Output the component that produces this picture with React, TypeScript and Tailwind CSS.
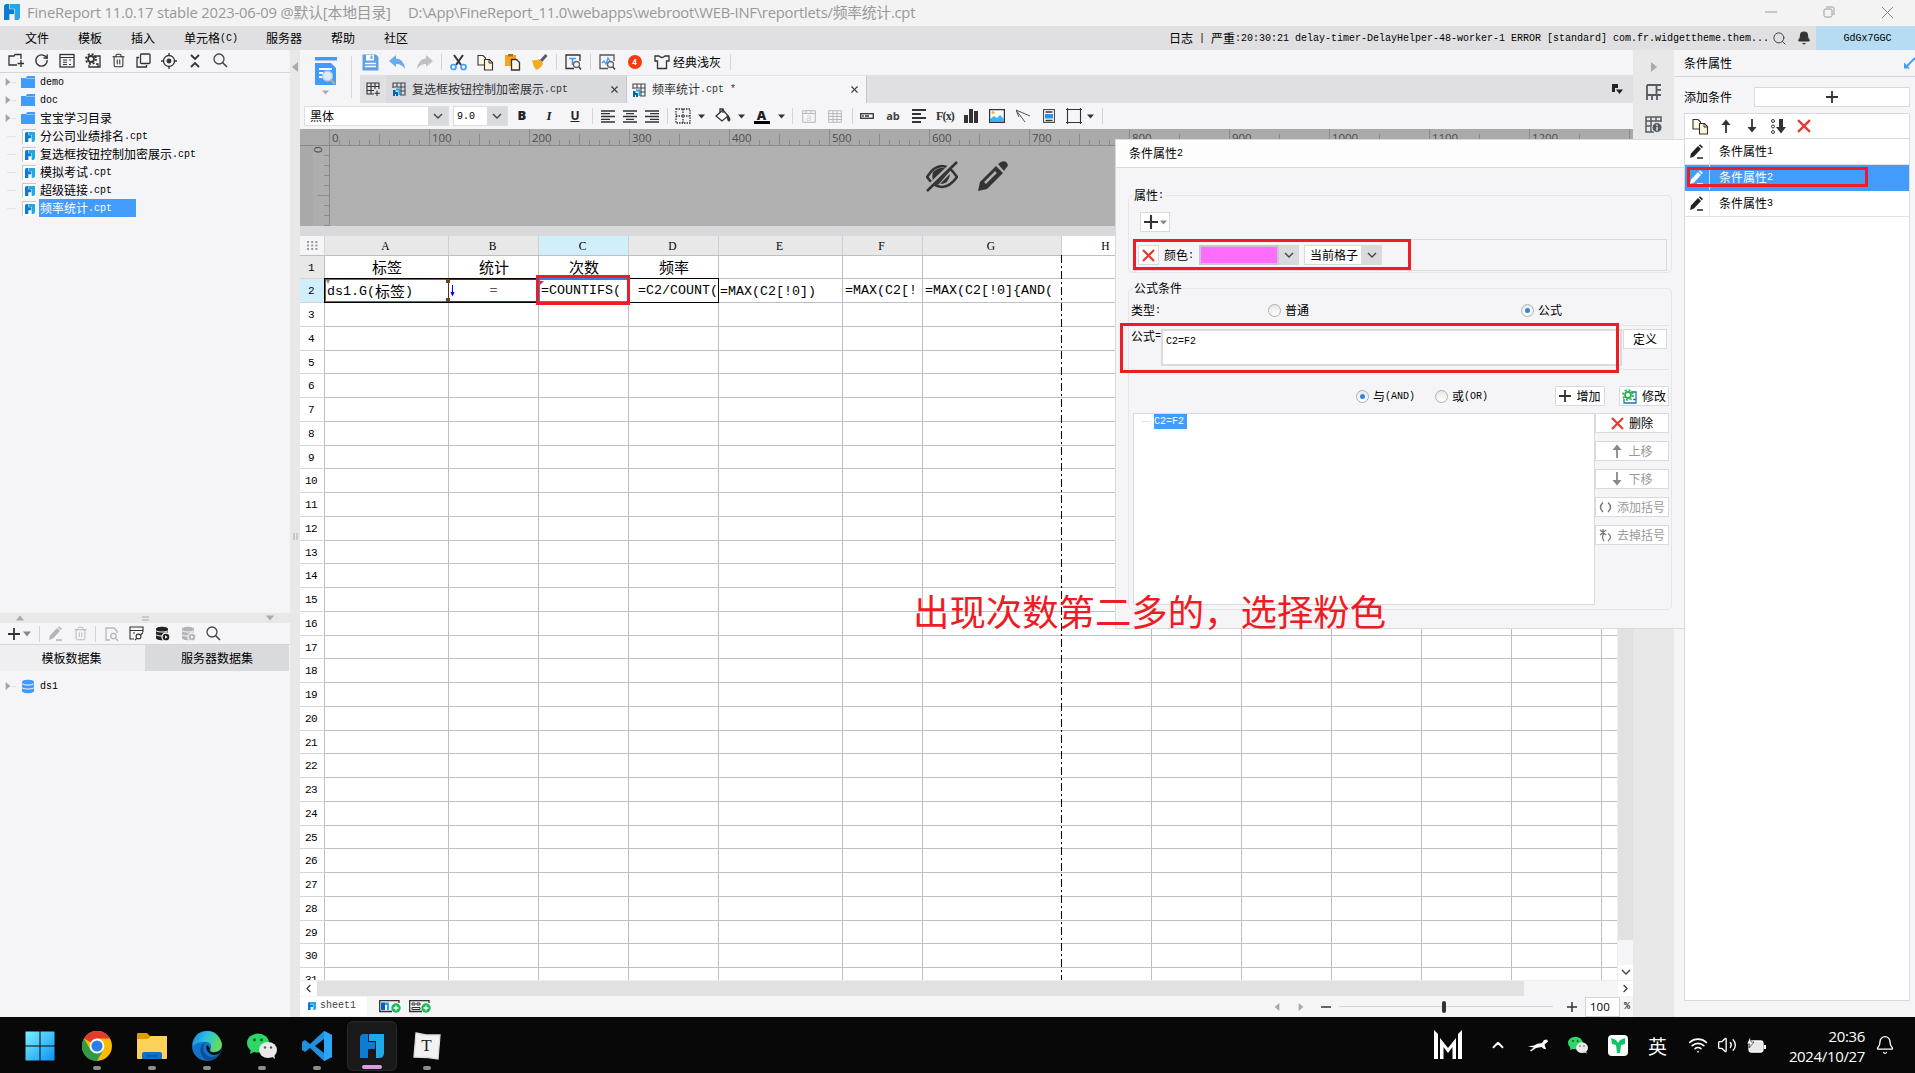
import React from "react";
import {
  Search, RotateCw, Trash2, Bell, Wifi, Volume2, X, ChevronLeft, ChevronRight, ChevronUp,
} from "lucide-react";

type Kids = { children?: React.ReactNode };

/* Mixed-script text: ideographs at full size, Latin runs in a narrower monospace. */
function T({ s, big = false }: { s: string; big?: boolean }) {
  const parts = s.match(/[\u2e80-\uffee]+|[^\u2e80-\uffee]+/g) || [];
  const latin = big ? "text-[13.33px]" : "text-[10px]";
  const cjk = big ? "text-[15px]" : "text-[12px]";
  return (
    <span className="flex items-center whitespace-pre leading-none">
      {parts.map((p, i) =>
        /[\u2e80-\uffee]/.test(p) ? (
          <span key={i} className={`${cjk} -translate-y-px font-['Noto_Sans_CJK_SC',sans-serif] leading-[15px]`}>{p}</span>
        ) : (
          <span key={i} className={`${latin} font-['Liberation_Mono',monospace] leading-[15px]`}>{p}</span>
        )
      )}
    </span>
  );
}

function Ic({ w = 16, h, vb, c = "#333", children }: Kids & { w?: number; h?: number; vb?: string; c?: string }) {
  return (
    <svg width={w} height={h ?? w} viewBox={vb ?? `0 0 ${w} ${h ?? w}`} fill="none" stroke={c} strokeWidth={1.3} className="shrink-0">
      {children}
    </svg>
  );
}

function FrLogo({ size }: { size: number }) {
  return (
    <svg width={size} height={size} viewBox="0 0 24 24" className="shrink-0">
      <path d="M0 4Q0 0 4 0H8V8H15V15H8V24H0Z" fill="#0a7cd4" />
      <path d="M9 0H24V19Q24 24 19 24H16V7H9Z" fill="#20a9e6" />
    </svg>
  );
}

function Tri({ dir = "down", c = "#aaa", w = 8 }: { dir?: "down" | "up" | "left" | "right"; c?: string; w?: number }) {
  const d = { down: "M0 2H10L5 8Z", up: "M0 8H10L5 2Z", left: "M8 0V10L2 5Z", right: "M2 0V10L8 5Z" }[dir];
  return (
    <svg width={w} height={w} viewBox="0 0 10 10" className="shrink-0"><path d={d} fill={c} /></svg>
  );
}

const Plus = ({ w = 12, c = "#333" }: { w?: number; c?: string }) => (
  <Ic w={w} vb="0 0 12 12" c={c}><path d="M6 0V12M0 6H12" strokeWidth={1.8} /></Ic>
);
const RedX = ({ w = 13 }: { w?: number }) => (
  <Ic w={w} vb="0 0 13 13" c="#e8392f"><path d="M1 1L12 12M12 1L1 12" strokeWidth={2.2} /></Ic>
);
const ArrowUp = ({ c = "#333" }: { c?: string }) => (
  <Ic w={12} h={14} c={c}><path d="M6 14V3" strokeWidth={1.8} /><path d="M1.5 6L6 .5L10.5 6Z" fill={c} stroke="none" /></Ic>
);
const ArrowDown = ({ c = "#333" }: { c?: string }) => (
  <Ic w={12} h={14} c={c}><path d="M6 0V11" strokeWidth={1.8} /><path d="M1.5 8L6 13.5L10.5 8Z" fill={c} stroke="none" /></Ic>
);
const CopyPages = () => (
  <Ic w={17} c="#333"><path d="M1 1.5H6L8.5 4V11H1Z" fill="#fff8e6" strokeWidth={1.1} /><path d="M7.5 5.5H12.5L15.5 8.5V16H7.5Z" fill="#fff5da" strokeWidth={1.1} /><path d="M12 5.5V9H15.5" strokeWidth={1} /></Ic>
);
const Pen = ({ c = "#222" }: { c?: string }) => (
  <Ic w={15} c={c}><path d="M1 14L2 9.5L9 2L12 5L5 12.5Z" fill={c} stroke="none" /><path d="M9.800 1.300L11 0.200L14 3L12.800 4.300Z" fill={c} stroke="none" /><path d="M8 14H14" strokeWidth={1.5} /></Ic>
);
const GridFile = () => (
  <Ic w={14} c="#444"><path d="M1 6V1H13V13H8M1 5H13M5 1V5M9 1V13M8 9H13" strokeWidth={1.1} /><path d="M1 8H3.5V10H6V14H4V12H3V14H1Z" fill="#0b5fb3" stroke="none" /><path d="M4 7.500H7.500V13" stroke="#20a9e6" strokeWidth={1.8} /></Ic>
);
const Db = ({ c = "#3f9bfc", badge }: { c?: string; badge?: boolean }) => (
  <Ic w={15}>
    <path d="M1 3C1 0 13 0 13 3V12C13 15 1 15 1 12Z" fill={c} stroke="none" />
    <path d="M1 4.5C2 6.5 12 6.5 13 4.5M1 8.5C2 10.5 12 10.5 13 8.5" stroke="#f5f5f7" strokeWidth={1} />
    {badge && <><circle cx="11" cy="11" r="4" fill={c} stroke="#f5f5f7" /><path d="M10 9.3L12.6 11L10 12.7Z" fill="#fff" stroke="none" /></>}
  </Ic>
);
const Lens = ({ s = 15 }: { s?: number }) => (
  <Ic w={s} vb="0 0 15 15" c="#444"><circle cx="6" cy="6" r="5" /><path d="M9.5 9.5L14 14" strokeWidth={1.6} /></Ic>
);
const Gear = ({ c }: { c: string }) => (
  <g><circle cx="6" cy="6" r="3" stroke={c} strokeWidth={1.8} /><circle cx="6" cy="6" r="5" stroke={c} strokeWidth={1.8} strokeDasharray="2 1.93" /></g>
);

const Slot = ({ children, w = "w-[27px]" }: Kids & { w?: string }) => (
  <div className={`flex h-full shrink-0 items-center justify-center ${w}`}>{children}</div>
);
const Sep = ({ w = "w-[7px]" }: { w?: string }) => (
  <div className={`flex shrink-0 items-center justify-center ${w}`}><div className="h-4 w-px bg-[#d3d4d8]" /></div>
);
const Caret = () => (
  <Ic w={10} h={7} c="#444"><path d="M1 1L5 5L9 1" strokeWidth={1.4} /></Ic>
);

function TitleBar() {
  return (
    <div className="flex h-[26px] shrink-0 items-center bg-[#f3f3f3] pb-[2px] pl-1 text-[14.8px] text-[#999]">
      <FrLogo size={16} />
      <div className="ml-[7px] w-[381px] whitespace-pre font-['Open_Sans','Noto_Sans_CJK_SC',sans-serif] tracking-[-0.17px]">FineReport 11.0.17 stable 2023-06-09 @默认[本地目录]</div>
      <div className="whitespace-pre font-['Open_Sans','Noto_Sans_CJK_SC',sans-serif] tracking-[-0.24px]">D:\App\FineReport_11.0\webapps\webroot\WEB-INF\reportlets/频率统计.cpt</div>
      <div className="ml-auto flex items-center pr-[21px]">
        <Ic w={12} c="#999"><path d="M0 6H12" strokeWidth={1} /></Ic>
        <span className="ml-[46px] flex"><Ic w={12} c="#999"><rect x="1" y="3" width="8" height="8" rx="1.5" strokeWidth={1} /><path d="M3 1H9.5Q11 1 11 2.5V9" strokeWidth={1} /></Ic></span>
        <span className="ml-[46px] flex"><Ic w={13} c="#888"><path d="M1 1L12 12M12 1L1 12" strokeWidth={1} /></Ic></span>
      </div>
    </div>
  );
}

function MenuBar() {
  return (
    <div className="flex h-6 shrink-0 items-center bg-[#e0e0e2] pl-[25px] text-black">
      <div className="w-[53px]"><T s="文件" /></div>
      <div className="w-[53px]"><T s="模板" /></div>
      <div className="w-[53px]"><T s="插入" /></div>
      <div className="w-[82px]"><T s="单元格(C)" /></div>
      <div className="w-[65px]"><T s="服务器" /></div>
      <div className="w-[53px]"><T s="帮助" /></div>
      <div><T s="社区" /></div>
      <div className="ml-auto flex h-full items-center">
        <div className="w-[42px]"><T s="日志 |" /></div>
        <div className="w-[561px]"><T s="严重:20:30:21 delay-timer-DelayHelper-48-worker-1 ERROR [standard] com.fr.widgettheme.them..." /></div>
        <Search size={15} strokeWidth={1.6} color="#444" />
        <span className="ml-[10px] mr-[5px] flex"><Bell size={14} fill="#333" color="#333" /></span>
        <div className="flex h-full w-[99px] items-center justify-center bg-[#b5dcf2] pl-1"><T s="GdGx7GGC" /></div>
      </div>
    </div>
  );
}

function TreeRow({ label, kind, selected }: { label: string; kind: "dir" | "file" | "db"; selected?: boolean }) {
  return (
    <div className="flex h-[18px] items-center pl-1">
      <div className="flex w-[17px] items-center">
        {kind !== "file" ? <><Tri dir="right" c="#a5a5a8" /><div className="h-px w-1 bg-[#dcdcdf]" /></> : <div className="ml-[3px] h-px w-[9px] bg-[#e2e2e5]" />}
      </div>
      <div className="flex w-[18px] items-center">
        {kind === "dir" && <Ic w={14} h={12}><path d="M0 2H5L6 0H14V12H0Z" fill="#3f9bfc" stroke="none" /><path d="M5 2.5H14" stroke="#8cc2fd" strokeWidth={1} /></Ic>}
        {kind === "file" && <div className="ml-px flex h-[15px] w-[14px] items-center justify-center border-l border-t border-[#c9c9cc] bg-white"><FrLogo size={10} /></div>}
        {kind === "db" && <Db />}
      </div>
      <div className={selected ? "flex h-[18px] w-[97px] items-center bg-[#429cfb] pl-px text-white" : "pl-px text-black"}><T s={label} /></div>
    </div>
  );
}

function LeftPanel() {
  return (
    <div className="flex w-[290px] shrink-0 flex-col bg-[#f5f5f7]">
      <div className="flex h-[23px] shrink-0 items-center border-b border-[#d5d5d8] pb-px pl-[3px]">
        <Slot w="w-[25.6px]"><Ic w={16}><path d="M9 12H1V3H6L7 1.5H13V6M13 7V14M9.5 10.5H16" /></Ic></Slot>
        <Slot w="w-[25.6px]"><RotateCw size={15} strokeWidth={2.3} color="#333" /></Slot>
        <Slot w="w-[25.6px]"><Ic w={16}><rect x="1" y="1.5" width="14" height="12.5" /><path d="M1 4.5H15M4 7H8M4 9.2H8M4 11.5H8M10 7H12M10 11.5H12" strokeWidth={1.1} /></Ic></Slot>
        <Slot w="w-[25.6px]"><Ic w={16}><Gear c="#333" /><path d="M9 3H15V14H4V12M11 11H13V14" /></Ic></Slot>
        <Slot w="w-[25.6px]"><Trash2 size={15} strokeWidth={1.7} color="#333" /></Slot>
        <Slot w="w-[25.6px]"><Ic w={15}><rect x="4.5" y="1" width="9.5" height="9.5" rx="1" /><path d="M3 4.5H1V14H10.5V12" /></Ic></Slot>
        <Slot w="w-[25.6px]"><Ic w={16}><circle cx="8" cy="8" r="5.5" /><circle cx="8" cy="8" r="1.8" fill="#333" /><path d="M8 0V3M8 13V16M0 8H3M13 8H16" /></Ic></Slot>
        <Slot w="w-[25.6px]"><Ic w={10} h={14}><path d="M1 1L5 5L9 1M1 13L5 9L9 13" strokeWidth={1.8} /></Ic></Slot>
        <Slot w="w-[25.6px]"><Lens /></Slot>
      </div>
      <div className="h-[540px] shrink-0">
        <TreeRow kind="dir" label="demo" />
        <TreeRow kind="dir" label="doc" />
        <TreeRow kind="dir" label="宝宝学习目录" />
        <TreeRow kind="file" label="分公司业绩排名.cpt" />
        <TreeRow kind="file" label="复选框按钮控制加密展示.cpt" />
        <TreeRow kind="file" label="模拟考试.cpt" />
        <TreeRow kind="file" label="超级链接.cpt" />
        <TreeRow kind="file" label="频率统计.cpt" selected />
      </div>
      <div className="flex h-[10px] shrink-0 items-center justify-between bg-[#e8e8e8] px-4">
        <Tri dir="up" /><Ic w={7} h={5} c="#aaa"><path d="M0 1H7M0 4H7" strokeWidth={1} /></Ic><Tri />
      </div>
      <div className="flex h-[22px] shrink-0 items-center border-b border-[#d5d5d8] pl-[8px]">
        <Plus /><span className="ml-[3px] flex w-[14px]"><Tri c="#888" /></span>
        <Sep w="w-[5px]" />
        <Slot w="w-[26px]"><Pen c="#b5b5b8" /></Slot>
        <Slot w="w-[24px]"><Trash2 size={15} strokeWidth={1.5} color="#b5b5b8" /></Slot>
        <Sep w="w-[7px]" />
        <Slot w="w-[25px]"><Ic w={14} c="#b5b5b8"><path d="M5 13H1V1H9L12 4V6" /><circle cx="8.5" cy="9" r="2.7" /><path d="M10.5 11L13 14" /></Ic></Slot>
        <Slot w="w-[25px]"><Ic w={15}><path d="M5 13H1V1H14V6M1 4.5H14M4 7H6" strokeWidth={1.1} /><circle cx="9.500" cy="10.500" r="2.400" strokeWidth={1.1} /><path d="M11.5 9L14 6.5M7.500 12.500L6 14" strokeWidth={1.1} /></Ic></Slot>
        <Slot w="w-[26px]"><Db c="#222" badge /></Slot>
        <Slot w="w-[26px]"><Db c="#b5b5b8" badge /></Slot>
        <Slot w="w-[25px]"><Lens /></Slot>
      </div>
      <div className="flex h-[26px] shrink-0 pr-px">
        <div className="flex w-[145px] items-center justify-center bg-[#efeff1] pr-[2px]"><T s="模板数据集" /></div>
        <div className="flex flex-1 items-center justify-center bg-[#d9dade]"><T s="服务器数据集" /></div>
      </div>
      <div className="pt-[6px]"><TreeRow kind="db" label="ds1" /></div>
    </div>
  );
}

function Toolbar() {
  return (
    <div className="-ml-[3px] flex h-[25px] items-center pb-px">
      <Slot><Ic w={17}><path d="M.5 .5H14L16.500 3V16.500H.5Z" fill="#5f9fe3" stroke="none" /><rect x="4" y="1" width="8" height="5.500" fill="#fff" stroke="none" /><path d="M9.500 1.500V5" stroke="#5f9fe3" strokeWidth={1.8} /><path d="M3 9.500H14M3 12.500H14" stroke="#fff" /></Ic></Slot>
      <Slot><Ic w={17} h={15}><path d="M0 6L7 0V3.500Q15 4 16 14Q12 8.500 7 9V12Z" fill="#6aaaf0" stroke="none" /></Ic></Slot>
      <Slot><Ic w={17} h={15}><path d="M17 6L10 0V3.500Q2 4 1 14Q5 8.500 10 9V12Z" fill="#c0c0c3" stroke="none" /></Ic></Slot>
      <Sep />
      <Slot><Ic w={17}><path d="M4 1L11 11M13 1L6 11" stroke="#333" strokeWidth={2} /><circle cx="3.500" cy="13" r="2.500" stroke="#3f9bfc" strokeWidth={1.700} /><circle cx="13.500" cy="13" r="2.500" stroke="#3f9bfc" strokeWidth={1.700} /></Ic></Slot>
      <Slot><CopyPages /></Slot>
      <Slot><Ic w={17}><path d="M1 1H12V12H1Z" fill="#f2a71b" stroke="none" /><path d="M4 2.500H9V0H4Z" fill="#b5651d" stroke="none" /><path d="M7.500 5.500H12.500L15.500 8.500V16H7.500Z" fill="#fff8e6" /></Ic></Slot>
      <Slot><Ic w={17}><path d="M15.500 1L10 7" stroke="#555a66" strokeWidth={3} /><path d="M1 6Q6 7 8 5L12 9Q11 14 5 16Q2 12 1 6Z" fill="#f2ac1d" stroke="none" /></Ic></Slot>
      <Sep />
      <Slot><Ic w={17}><path d="M9 14.500H1V1H15V7" /><path d="M4 4.500H11M7.500 4.500V11" stroke="#3f9bfc" strokeWidth={1.700} /><circle cx="11.500" cy="10.500" r="3" stroke="#666" /><path d="M14 13L16 15.500" /></Ic></Slot>
      <Sep />
      <Slot><Ic w={17}><path d="M9 14.500H1V1H15V7" stroke="#555" /><path d="M3 9L5 7L7 10L9 4L11 7" stroke="#3f9bfc" /><circle cx="11.500" cy="10.500" r="3" stroke="#666" /><path d="M14 13L16 15.500" /></Ic></Slot>
      <Slot><div className="flex size-[14px] items-center justify-center rounded-full bg-[#f63a10] font-['Open_Sans',sans-serif] text-[8px] font-bold text-white">4</div></Slot>
      <Slot><Ic w={16}><path d="M1 2H5Q8 5 11 2H15V7H12.500V14.500H3.500V7H1Z" /></Ic></Slot>
      <span className="mr-[6px] -ml-[2px]"><T s="经典浅灰" /></span>
      <Sep />
    </div>
  );
}

function TabStrip() {
  return (
    <div className="flex h-7 bg-[#e0e0e2]">
      <Slot w="w-[26px]"><Ic w={14}><path d="M8 12H1V1H13V7M1 4.500H13M1 8.500H8M5 1V12M9 1V7M11 8.500V14M8.500 11.200H14" strokeWidth={1.1} /></Ic></Slot>
      <div className="flex w-[240px] items-center bg-[#d9dadd] pl-[6px] text-[#333]">
        <GridFile /><span className="ml-[6px]"><T s="复选框按钮控制加密展示.cpt" /></span>
        <span className="ml-auto mr-[6px]"><X size={11} strokeWidth={2.500} color="#444" /></span>
      </div>
      <div className="flex w-[241px] items-center border-x border-t border-t-[#e4e4e6] border-x-[#c6c7ca] bg-[#f5f5f7] pl-[5px] text-[#333]">
        <GridFile /><span className="ml-[6px]"><T s="频率统计.cpt *" /></span>
        <span className="ml-auto mr-[6px]"><X size={11} strokeWidth={2.500} color="#444" /></span>
      </div>
      <span className="ml-auto mr-[9px] flex items-center"><Ic w={13} h={11}><path d="M1 0H7V4H4V8H1Z" fill="#222" stroke="none" /><path d="M5 5.500H12L8.500 10Z" fill="#222" stroke="none" /></Ic></span>
    </div>
  );
}

const Align = ({ d }: { d: string }) => <Ic w={14} h={13}><path d={d} strokeWidth={1.300} /></Ic>;

function FontBar() {
  return (
    <div className="flex h-[26px] items-center bg-[#f5f5f7] pl-1">
      <div className="flex h-5 w-[145px] border border-[#dcdde0] bg-white">
        <div className="flex flex-1 items-center pl-[5px]"><T s="黑体" /></div>
        <div className="flex w-5 items-center justify-center bg-[#d9dadd]"><Caret /></div>
      </div>
      <div className="ml-1 flex h-5 w-[55px] border border-[#dcdde0] bg-white">
        <div className="flex flex-1 items-center pl-[3px]"><T s="9.0" /></div>
        <div className="flex w-5 items-center justify-center bg-[#d9dadd]"><Caret /></div>
      </div>
      <Slot w="w-[28px]"><span className="font-['Open_Sans',sans-serif] text-[13px] font-extrabold text-[#222]">B</span></Slot>
      <Slot w="w-[26px]"><span className="font-['Liberation_Serif',serif] text-[13px] font-bold italic text-[#222]">I</span></Slot>
      <Slot w="w-[26px]"><span className="font-['Open_Sans',sans-serif] text-[12px] font-bold text-[#222] underline">U</span></Slot>
      <Sep w="w-[9px]" />
      <Slot w="w-[22px]"><Align d="M0 1H14M0 3.700H9M0 6.500H14M0 9.300H9M0 12H14" /></Slot>
      <Slot w="w-[22px]"><Align d="M0 1H14M3 3.700H11M0 6.500H14M3 9.300H11M0 12H14" /></Slot>
      <Slot w="w-[22px]"><Align d="M0 1H14M5 3.700H14M0 6.500H14M5 9.300H14M0 12H14" /></Slot>
      <Sep w="w-[9px]" />
      <Slot w="w-[22px]"><Ic w={16}><path d="M1 1H15V15H1ZM8 1V15M1 8H15" strokeDasharray="1.500 1" /></Ic></Slot>
      <Slot w="w-[14px]"><Tri c="#333" w={7} /></Slot>
      <Slot w="w-[30px]"><Ic w={16}><path d="M1 8L8 2L13 8L7 13Z" fill="#fff" /><path d="M5 5V1H8V5" /><path d="M13 8Q16 12 14 13Q12 12 13 8Z" fill="#333" /></Ic></Slot>
      <Slot w="w-[7px]"><Tri c="#333" w={7} /></Slot>
      <Slot w="w-[33px]"><div className="flex w-4 flex-col items-center"><span className="font-['Open_Sans',sans-serif] text-[13px] font-extrabold leading-[12px] text-[#222]">A</span><div className="h-[3px] w-4 bg-black" /></div></Slot>
      <Slot w="w-[7px]"><Tri c="#333" w={7} /></Slot>
      <Sep w="w-[14px]" />
      <Slot w="w-[20px]"><Ic w={14} h={13} c="#b8b8bb"><path d="M.7 .7H13.300V12.300H.7ZM.7 3.500H13.300M4 .7V3.500M9 .7V3.500" strokeWidth={1} /><path d="M5 6H8.500V10.500H5V8.300H8.500" stroke="#d8d8db" strokeWidth={1} /></Ic></Slot>
      <Slot w="w-[32px]"><Ic w={14} h={13} c="#b8b8bb"><path d="M.7 .7H13.300V12.300H.7ZM.7 3.700H13.300M.7 6.500H13.300M.7 9.500H13.300M5 .7V12.300M9 .7V12.300" strokeWidth={1} /></Ic></Slot>
      <Sep w="w-[3px]" />
      <Slot w="w-[26px]"><Ic w={14} h={6}><rect x=".7" y=".7" width="12.600" height="4.600" /><path d="M3 2V4M5 3H9" /></Ic></Slot>
      <Slot w="w-[26px]"><span className="font-['Open_Sans',sans-serif] text-[11px] font-bold text-[#444]">ab</span></Slot>
      <Slot w="w-[26px]"><Ic w={14} h={14}><path d="M0 1H14M0 5H9M0 9H14M0 13H9" strokeWidth={1.800} /></Ic></Slot>
      <Slot w="w-[26px]"><span className="font-['Liberation_Serif',serif] text-[12px] font-bold tracking-[-0.8px] text-[#333]">F(x)</span></Slot>
      <Slot w="w-[26px]"><Ic w={14}><path d="M0 6H4V14H0ZM5 0H9V14H5ZM10 2H14V14H10Z" fill="#333" stroke="none" /></Ic></Slot>
      <Slot w="w-[26px]"><Ic w={16} h={14}><rect x=".6" y=".6" width="14.800" height="12.800" fill="#fff" /><path d="M1 13V10L5 7L8 9L11 6L15 10V13Z" fill="#38b6f4" stroke="none" /><circle cx="4" cy="3.500" r="1.500" fill="#f5b21b" stroke="none" /></Ic></Slot>
      <Slot w="w-[26px]"><Ic w={14} c="#555"><path d="M0 1L14 7M0 1L9 13M0 1L3 8" strokeWidth={1} /></Ic></Slot>
      <Slot w="w-[26px]"><Ic w={12} h={14}><rect x=".6" y=".6" width="10.800" height="12.800" fill="#fff" strokeWidth={1} /><path d="M2.500 3H9.500M2.500 11.500H9.500" /><path d="M2 5H10V9.500H2Z" fill="#2f8fe8" stroke="none" /></Ic></Slot>
      <Slot w="w-[24px]"><Ic w={16}><path d="M1.500 0V16M14.500 0V16M0 1.500H16M0 14.500H16" strokeWidth={1.100} /></Ic></Slot>
      <Slot w="w-[8px]"><Tri c="#333" w={7} /></Slot>
      <Sep w="w-[17px]" />
    </div>
  );
}

const rulerMarks = Array.from({ length: 13 }, (_, i) => i * 100);

function RulerArea() {
  const ticks = Array.from({ length: 131 }, (_, i) => i)
    .map((i) => `M${i * 10 + 0.5} ${i % 10 === 0 ? 0 : i % 5 === 0 ? 5 : 11}V16`)
    .join("");
  const side = Array.from({ length: 8 }, (_, i) => i)
    .map((i) => `M${i % 5 === 4 ? 5 : 11} ${i * 10 + 9.5}H16`)
    .join("");
  return (
    <div className="flex h-[97px] shrink-0 flex-col bg-[#b1b1b1]">
      <div className="flex h-[17px] overflow-hidden border-b border-[#8a8a8a] bg-[#aaaaaa] pl-[29px]">
        <div className="relative flex w-[1304px] shrink-0">
          <svg width="1304" height="16" className="absolute left-0 top-0"><path d={ticks} stroke="#8b8b8b" fill="none" /></svg>
          {rulerMarks.map((m) => (
            <div key={m} className="h-4 w-[100px] shrink-0 pl-[3px] font-['Open_Sans',sans-serif] text-[11.5px] leading-[17px] tracking-[-0.1px] text-[#4c4c4c]">{m}</div>
          ))}
        </div>
      </div>
      <div className="flex flex-1">
        <div className="w-[13px] bg-[#a9a9a9]" />
        <div className="relative w-[17px] border-r border-[#8a8a8a] bg-[#aeaeae]">
          <svg width="16" height="80"><path d={side} stroke="#8b8b8b" fill="none" /></svg>
          <span className="absolute left-[1px] top-[-5px] -rotate-90 font-['Open_Sans',sans-serif] text-[11.5px] text-[#4c4c4c]">0</span>
        </div>
        <div className="flex flex-1 gap-[18px] pl-[596px] pt-[14px]">
          <Ic w={32} c="#333">
            <path d="M1 17Q8 6 16 6T31 17Q24 27 16 27T1 17Z" strokeWidth={2.600} />
            <path d="M7 12Q16 4 24 11L12 25Q4 21 7 12Z" fill="#333" stroke="none" />
            <path d="M14 24Q23 24 24 14Z" fill="#333" stroke="none" />
            <path d="M0 30L30 1" stroke="#b1b1b1" strokeWidth={5} /><path d="M1 31L31 2" strokeWidth={2.500} />
          </Ic>
          <Ic w={32} c="#333">
            <path d="M2 31L4 22L20 6L27 13L11 29Z" fill="#333" stroke="none" /><path d="M9 23L20 12" stroke="#b1b1b1" strokeWidth={2.500} />
            <path d="M22 4L25 2Q29 0 31 3T30 8L28 11Z" fill="#333" stroke="none" />
          </Ic>
        </div>
      </div>
    </div>
  );
}

const COLS = "grid grid-cols-[25px_124px_90px_90px_90px_124px_80px_139px_90px_90px_90px_90px_90px_90px_15px]";
const rows = Array.from({ length: 31 }, (_, i) => ({
  n: i + 1,
  h: Math.floor(255 + 23.75 * (i + 1)) - Math.floor(255 + 23.75 * i),
}));
const row1: Record<number, string> = { 0: "标签", 1: "统计", 2: "次数", 3: "频率" };

function CellText({ i }: { i: number }) {
  const f = "whitespace-pre font-['Liberation_Mono',monospace] text-[13.33px] leading-[17px]";
  switch (i) {
    case 0: return <div className="flex h-full items-center pl-[2px] pt-[2px]"><T big s="ds1.G(标签)" /></div>;
    case 1: return <div className="flex h-full items-center justify-center text-[#555]"><T big s="=" /></div>;
    case 2: return <div className={`${f} pl-[2px] pt-[3px]`}>=COUNTIFS(</div>;
    case 3: return <div className={`${f} pl-[9px] pt-[3px]`}>=C2/COUNT(</div>;
    case 4: return <div className={`${f} pl-[1px] pt-[4px]`}>=MAX(C2[!0])</div>;
    case 5: return <div className={`${f} pl-[2px] pt-[3px]`}>{"=MAX(C2[!\n0]{!C2!=F"}</div>;
    case 6: return <div className={`${f} pl-[2px] pt-[3px]`}>{"=MAX(C2[!0]{AND(\n(C2!=F2,C2!=F2)}"}</div>;
    default: return null;
  }
}

function Sheet() {
  return (
    <div className="flex h-[754px] shrink-0">
      <div className="relative w-[1317px] shrink-0 overflow-hidden bg-white">
        <div className={`${COLS} h-[20px] border-b border-[#bfbfbf]`}>
          <div className="flex items-center justify-center border-r border-[#d5d5d8] bg-[#f5f5f7]">
            <Ic w={11} h={9}><path d="M0 1H11M0 4.500H11M0 8H11" stroke="#999" strokeWidth={2} strokeDasharray="2 2.200" /></Ic>
          </div>
          {"ABCDEFGHIJKLMN".split("").map((c, i) => (
            <div key={c} className={`flex items-center justify-center border-r border-[#d0d0d3] pr-[2px] pt-[2px] font-['Liberation_Serif',serif] text-[11.5px] ${i === 2 ? "bg-[#d0effb]" : i < 7 ? "bg-[#e8e8e8]" : "bg-white"}`}>{i < 13 ? c : ""}</div>
          ))}
        </div>
        {rows.map((r) => (
          <div key={r.n} className={COLS} style={{ height: r.h }}>
            <div className={`flex items-center justify-center border-b border-r border-b-[#d5d5d8] border-r-[#bfbfbf] pr-[2px] pt-[2px] font-['Liberation_Mono',monospace] text-[11px] tracking-[-0.6px] ${r.n === 1 ? "bg-[#e8e8e8]" : r.n === 2 ? "bg-[#d0effb]" : "bg-white"}`}>{r.n}</div>
            {Array.from({ length: 14 }, (_, i) => (
              <div key={i} className={`overflow-hidden border-b border-[#bfbfbf] ${i === 6 || i === 13 ? "" : "border-r"}`}>
                {r.n === 1 && row1[i] && <div className="flex h-full items-center justify-center pl-px"><T big s={row1[i]} /></div>}
                {r.n === 2 && <CellText i={i} />}
              </div>
            ))}
          </div>
        ))}
        {/* cell borders and selection markers over the grid */}
        <div className="absolute left-[24px] top-[42px] h-[25px] w-[395px] border border-black" />
        <div className="absolute left-[25px] top-[43px] h-[23px] w-[124px] border border-[#8a6030]" />
        <div className="absolute left-[148px] top-[43px] h-[23px] w-[90px] border border-[#5a3408]" />
        <div className="absolute left-[146px] top-[43px] h-[4px] w-[4px] bg-[#6a4416]" />
        <div className="absolute left-[146px] top-[62px] h-[4px] w-[4px] bg-[#6a4416]" />
        <svg width="7" height="12" className="absolute left-[149px] top-[49px]"><path d="M3.500 0V9" stroke="#00f" /><path d="M1.500 7H5.500L3.500 11.500Z" fill="#00f" /></svg>
        <svg width="4" height="4" className="absolute left-[26px] top-[44px]"><path d="M0 0H4L2 4Z" fill="#888" /></svg>
        <div className="absolute left-[238px] top-[42px] h-[25px] w-[91px] border-2 border-[#2f80e4]" />
        <svg width="4" height="4" className="absolute left-[240px] top-[45px]"><path d="M0 0H4L0 4Z" fill="#e5195a" /></svg>
        <svg width="1" height="725" className="absolute left-[761px] top-[19px]"><path d="M.5 0V725" stroke="#000" strokeDasharray="8 3 2 3" /></svg>
        <div className="absolute left-[236px] top-[39px] h-[30px] w-[94px] border-[3px] border-[#ee1c24]" />
      </div>
      <div className="flex w-[16px] flex-col border-l border-[#eee] bg-[#e1e1e1]">
        <div className="mt-auto h-[40px] bg-[#f5f5f7] pt-[25px]"><div className="flex h-[15px] items-center justify-center bg-white"><Caret /></div></div>
        <div className="h-[10px] bg-[#f5f5f7]" />
      </div>
    </div>
  );
}

function SheetFooter() {
  return (
    <div className="flex flex-1 flex-col bg-[#f5f5f7]">
      <div className="flex h-[16px] items-center justify-between border-t border-[#eee]">
        <div className="flex h-[15px] w-[17px] items-center justify-center bg-white"><ChevronLeft size={13} color="#333" /></div>
        <div className="h-[15px] w-[1207px] bg-[#e1e1e1]" />
        <div className="ml-auto flex h-[15px] w-[15px] items-center justify-center bg-white"><ChevronRight size={13} color="#333" /></div>
      </div>
      <div className="flex h-[21px] items-center">
        <div className="flex h-[19px] w-[67px] items-center bg-white pb-[2px] pl-2 text-[#444]"><FrLogo size={8} /><span className="ml-1"><T s="sheet1" /></span></div>
        {[0, 1].map((k) => (
          <span key={k} className={k ? "ml-[8px]" : "ml-[12px]"}>
            <Ic w={22} h={13}>
              <path d="M13 11.500H.7V.7H20V3" />
              {k === 0 ? <><path d="M2 2.500H6V10H2Z" fill="#0a5fb8" stroke="none" /><path d="M6 2.500H10V10H8V5H6Z" fill="#20a9e6" stroke="none" /></> : <path d="M3 3H6V5H3ZM8 3H11V5H8ZM3 7.500H11V9.500H3Z" strokeWidth={1} />}
              <circle cx="17" cy="8" r="4.700" fill="#1db954" stroke="none" /><path d="M17 5.500V10.500M14.500 8H19.500" stroke="#fff" />
            </Ic>
          </span>
        ))}
        <div className="ml-auto flex items-center">
          <Tri dir="left" /><span className="ml-[16px] mr-[16px] flex"><Tri dir="right" /></span>
          <Ic w={10} h={2}><path d="M0 1H10" strokeWidth={1.500} /></Ic>
          <div className="ml-[8px] mr-[14px] flex h-3 w-[214px] items-center bg-[linear-gradient(#d5d5d8,#d5d5d8)] bg-[length:100%_1px] bg-center bg-no-repeat pl-[103px]"><div className="h-3 w-1 rounded-sm bg-[#333]" /></div>
          <Plus w={10} />
          <div className="ml-[8px] flex h-[20px] w-[35px] items-center border border-[#d5d5d8] bg-white pl-1 font-['Open_Sans',sans-serif] text-[11.5px]">100</div>
          <div className="w-[13px] pl-[4px]"><T s="%" /></div>
        </div>
      </div>
    </div>
  );
}

function Center() {
  return (
    <div className="flex w-[1333px] shrink-0 flex-col">
      <div className="flex h-[53px] shrink-0 bg-[#f5f5f7]">
        <div className="flex w-[60px] items-center">
          <div className="flex h-[42px] w-[52px] flex-col items-center border-r border-[#d8d8db]">
            <Ic w={22} h={30}><path d="M0 1H22V4.500H0Z" fill="#3f9bfc" stroke="none" /><path d="M0 7H16L21 12V29H0Z" fill="#3f9bfc" stroke="none" /><path d="M4 13H17M4 17H8M4 21H8" stroke="#fff" strokeWidth={1.800} /><circle cx="12.500" cy="20" r="5" fill="#dcebfb" stroke="#b9c6d4" /><path d="M16 24L20 28" stroke="#b0a89a" strokeWidth={2.500} /></Ic>
            <span className="mt-[3px]"><Tri w={7} /></span>
          </div>
        </div>
        <div className="min-w-0 flex-1"><Toolbar /><TabStrip /></div>
      </div>
      <FontBar />
      <RulerArea />
      <div className="h-[10px] shrink-0 bg-[#d9d9dc]" />
      <div className="h-[744px] shrink-0 overflow-hidden"><Sheet /></div>
      <SheetFooter />
    </div>
  );
}

function RightStrip() {
  return (
    <div className="flex w-[41px] shrink-0 flex-col items-center bg-[#e8e8e8] pt-[12px]">
      <Tri dir="right" w={10} />
      <span className="mt-[12px]"><Ic w={17} c="#555a63"><path d="M2 1H16M2 11H16M2 1V16M7 11V16M12 11V16M11.500 1V11M11 5.800H16" strokeWidth={1.800} /></Ic></span>
      <span className="mt-[15px]"><Ic w={17} c="#555a63"><path d="M9 16H1V1H16V6M1 5H16M6 1V16M1 10H7M11 1V5" strokeWidth={1.500} /><circle cx="12" cy="11.500" r="5" fill="#555a63" stroke="#e8e8e8" strokeWidth={1} /><path d="M12 11V14.500M12 8.500V10" stroke="#fff" /></Ic></span>
    </div>
  );
}

function RightPanel() {
  return (
    <div className="flex min-w-0 flex-1 flex-col bg-[#f5f5f7]">
      <div className="flex h-[27px] shrink-0 items-center justify-between border-b border-[#d5d5d8] pl-[10px]">
        <T s="条件属性" /><Ic w={12} c="#3f9bfc"><path d="M12 1L4 9" strokeWidth={1.800} /><path d="M1 5.500V11.500H7Z" fill="#3f9bfc" stroke="none" /></Ic>
      </div>
      <div className="flex h-[36px] shrink-0 items-center pl-[10px] pt-[4px]">
        <div className="w-[70px]"><T s="添加条件" /></div>
        <div className="flex h-5 w-[156px] items-center justify-center border border-[#d9dadd] bg-white"><Plus /></div>
      </div>
      <div className="ml-[10px] h-[888px] w-[226px] border border-[#d9dadd] bg-white">
        <div className="flex h-[25px] items-center border-b border-[#d9dadd] pl-[2px]">
          <Slot w="w-[26px]"><CopyPages /></Slot><Slot w="w-[26px]"><ArrowUp /></Slot><Slot w="w-[26px]"><ArrowDown /></Slot>
          <Slot w="w-[26px]"><Ic w={15}><circle cx="2" cy="2" r="1.500" strokeWidth={1} /><circle cx="2" cy="7.500" r="1.500" strokeWidth={1} /><circle cx="2" cy="13" r="1.500" strokeWidth={1} /><path d="M8 0H12V8H15L10 14.500L5 8H8Z" fill="#333" stroke="none" /></Ic></Slot>
          <Slot w="w-[26px]"><RedX w={14} /></Slot>
        </div>
        {[1, 2, 3].map((n) => (
          <div key={n} className={`relative flex h-[26px] items-center border-b ${n === 2 ? "border-[#429cfb] bg-[#429cfb] text-white" : "border-[#e2e2e5] text-black"}`}>
            <div className={`flex h-full w-[25px] items-center border-r pb-px pl-[4px] ${n === 2 ? "border-[#c5e0fd]" : "border-[#ebebed]"}`}><Pen c={n === 2 ? "#fff" : "#222"} /></div>
            <span className="pb-px pl-[9px]"><T s={`条件属性${n}`} /></span>
            {n === 2 && <div className="absolute left-[2px] top-[2px] h-[20px] w-[181px] border-[3px] border-[#ee1c24]" />}
          </div>
        ))}
      </div>
    </div>
  );
}

const Radio = ({ on, label }: { on?: boolean; label: string }) => (
  <div className="flex items-center gap-[4px]">
    <div className="flex size-[13px] items-center justify-center rounded-full border border-[#b0b0b0] bg-gradient-to-b from-[#e8e8e8] to-white">{on && <div className="size-[5px] rounded-full bg-[#2f86e8]" />}</div>
    <T s={label} />
  </div>
);
const Btn = ({ children, w, off }: Kids & { w: string; off?: boolean }) => (
  <div className={`flex h-5 shrink-0 items-center justify-center gap-[5px] border border-[#d9dadd] bg-white ${w} ${off ? "text-[#999]" : "text-black"}`}>{children}</div>
);

function Dialog() {
  return (
    <div className="absolute left-[1115px] top-[139px] flex h-[490px] w-[570px] flex-col border border-[#d9dadd] bg-[#f5f5f7]">
      <div className="flex h-[28px] shrink-0 items-center border-b border-[#d9dadd] bg-[#fdfdfd] pl-[13px]"><T s="条件属性2" /></div>
      <div className="mx-[12px] mt-[27px] h-[78px] shrink-0 rounded-[5px] border border-[#e6e6e9] px-[4px]">
        <div className="-mt-[8px] flex h-[15px]"><span className="bg-[#f5f5f7] px-[1px]"><T s="属性:" /></span></div>
        <div className="ml-[7px] mt-[9px] flex h-5 w-[30px] items-center justify-center gap-[2px] border border-[#d9dadd] bg-white"><Plus w={14} /><Tri w={7} c="#888" /></div>
        <div className="relative mt-[7px] flex h-8 items-center border border-[#d9dadd] pl-[4px]">
          <Btn w="w-[21px]"><RedX /></Btn>
          <div className="ml-[5px] w-[35px]"><T s="颜色:" /></div>
          <div className="h-5 w-[80px] border-2 border-[#c6c7cb] bg-[#ff6cff]" />
          <div className="flex h-5 w-5 items-center justify-center bg-[#d9dadd]"><Caret /></div>
          <div className="ml-[5px] flex h-5 w-[58px] items-center justify-center border border-[#d9dadd] bg-white pl-[2px]"><T s="当前格子" /></div>
          <div className="flex h-5 w-5 items-center justify-center bg-[#d9dadd]"><Caret /></div>
          <div className="absolute left-[-1px] top-[-1px] h-[31px] w-[278px] border-[3px] border-[#ee1c24]" />
        </div>
      </div>
      <div className="relative mx-[12px] mt-[15px] h-[322px] shrink-0 rounded-[5px] border border-[#e6e6e9] px-[2px]">
        <div className="-mt-[8px] ml-[2px] flex h-[15px]"><span className="bg-[#f5f5f7] px-[1px]"><T s="公式条件" /></span></div>
        <div className="flex h-[30px] items-center border-b border-[#e4e4e7] pb-px">
          <div className="w-[137px]"><T s="类型:" /></div>
          <div className="w-[253px]"><Radio label="普通" /></div>
          <Radio on label="公式" />
        </div>
        <div className="flex h-[44px] border-b border-[#e4e4e7] pt-[3px]">
          <div className="w-[30px] shrink-0"><T s="公式=" /></div>
          <div className="mr-[1px] h-[37px] w-[461px] shrink-0 border-2 border-[#d9dadd] bg-white pl-[3px] pt-[3px]"><T s="C2=F2" /></div>
          <Btn w="w-[44px]"><T s="定义" /></Btn>
        </div>
        <div className="flex h-[43px] items-end pb-[7px]">
          <div className="flex h-[20px] w-full items-center">
            <div className="ml-[225px] w-[79px]"><Radio on label="与(AND)" /></div>
            <div className="w-[120px]"><Radio label="或(OR)" /></div>
            <Btn w="w-[50px]"><Plus /><T s="增加" /></Btn>
            <span className="ml-[14px]"><Btn w="w-[50px]"><Ic w={15}><path d="M9 3H14V14H2V10M11 10.500H14" stroke="#1b75c4" /><Gear c="#2fae4e" /></Ic><T s="修改" /></Btn></span>
          </div>
        </div>
        <div className="flex pl-[2px]">
          <div className="h-[192px] w-[463px] border border-[#d9dadd] bg-white">
            <div className="flex h-[15px] items-center pl-[7px]"><div className="mr-[4px] h-px w-[9px] bg-[#e2e2e5]" /><div className="flex h-[15px] w-[33px] items-center bg-[#429cfb] text-white"><T s="C2=F2" /></div></div>
          </div>
          <div className="flex flex-col gap-2">
            <Btn w="w-[74px]"><RedX /><T s="删除" /></Btn>
            <Btn off w="w-[74px]"><ArrowUp c="#888" /><T s="上移" /></Btn>
            <Btn off w="w-[74px]"><ArrowDown c="#888" /><T s="下移" /></Btn>
            <Btn off w="w-[74px]"><Ic w={13} c="#777"><path d="M4 1.500Q-1 6 4 11M9 1.500Q14 6 9 11" strokeWidth={1.500} /></Ic><T s="添加括号" /></Btn>
            <Btn off w="w-[74px]"><Ic w={13} c="#777"><path d="M5 4.500Q2 8 5 12M9 4.500Q14 8 9 12M1 1L7 6M7 1L1 6M4 0V6" strokeWidth={1.300} /></Ic><T s="去掉括号" /></Btn>
          </div>
        </div>
        <div className="absolute left-[-9px] top-[34px] h-[50px] w-[499px] border-[3px] border-[#ee1c24]" />
      </div>
    </div>
  );
}

const WeChat = ({ w }: { w: number }) => (
  <Ic w={w} vb="0 0 30 30"><ellipse cx="11" cy="12" rx="11" ry="9.500" fill="#2fd566" stroke="none" /><path d="M4 18L3 23L9 20Z" fill="#2fd566" stroke="none" /><ellipse cx="21" cy="19" rx="9" ry="8" fill="#e9e9e9" stroke="none" /><path d="M24 25L28 28L27 23Z" fill="#e9e9e9" stroke="none" /><circle cx="7.500" cy="9" r="1.400" fill="#0a5a28" stroke="none" /><circle cx="14.500" cy="9" r="1.400" fill="#0a5a28" stroke="none" /><circle cx="18" cy="16.500" r="1.200" fill="#555" stroke="none" /><circle cx="24" cy="16.500" r="1.200" fill="#555" stroke="none" /></Ic>
);

function Taskbar() {
  const apps: React.ReactNode[] = [
    <Ic w={30}><defs><linearGradient id="win" gradientUnits="userSpaceOnUse" x1="0" y1="0" x2="30" y2="30"><stop offset="0" stopColor="#7df3ff" /><stop offset="1" stopColor="#0a90f5" /></linearGradient></defs><path d="M0.500 0.500H14.500V14.500H.5ZM15.500 .5H29.500V14.500H15.500ZM.5 15.500H14.500V29.500H.5ZM15.500 15.500H29.500V29.500H15.500Z" fill="url(#win)" stroke="none" /></Ic>,
    <Ic w={30}><circle cx="15" cy="15" r="15" fill="#fbbc05" stroke="none" /><path d="M15 15L2 7.500A15 15 0 0 1 28 7.500H15Z" fill="#e33b2e" stroke="none" /><path d="M2 7.500A15 15 0 0 0 15 30L21.500 18.500L8.500 18.700Z" fill="#2f9a48" stroke="none" /><circle cx="15" cy="15" r="6.500" fill="#2b7de9" stroke="#fff" strokeWidth={1.800} /></Ic>,
    <Ic w={30} h={28}><path d="M0 2Q0 1 1 1H10L13 4H29Q30 4 30 5V10H0Z" fill="#e09a05" stroke="none" /><path d="M0 7H11L14 4H30V26Q30 27 29 27H1Q0 27 0 26Z" fill="#fdd25a" stroke="none" /><path d="M5 27V22Q5 20 7 20H23Q25 20 25 22V27Z" fill="#1072c5" stroke="none" /><path d="M9 24H21" stroke="#0b4f91" /></Ic>,
    <Ic w={30}><defs><linearGradient id="edge" x1="0" y1="0" x2="1" y2=".4"><stop offset="0" stopColor="#1680dc" /><stop offset=".5" stopColor="#2cc3e0" /><stop offset="1" stopColor="#62dd55" /></linearGradient></defs><circle cx="15" cy="15" r="15" fill="#1174cc" stroke="none" /><path d="M1 11Q4 0 15 0T30 13Q30 20 22 21Q17 21 19 17Q20 12 15 11Q7 10 1 15Z" fill="url(#edge)" stroke="none" /><path d="M13 11Q8 20 16 25Q22 28 28 22Q24 30 15 30Q6 24 9 15Z" fill="#0d4f9c" stroke="none" /><path d="M18 17Q16 21 21 21.500Q27 21.500 30 17L28 22Q22 26 17 22Q13 18 15 14Z" fill="#080808" stroke="none" /></Ic>,
    <WeChat w={30} />,
    <Ic w={30}><path d="M22 0L30 4V26L22 30L8 17L3 21L0 19V11L3 9L8 13ZM22 8L13 15L22 22Z" fill="#1f8fe0" fillRule="evenodd" stroke="none" /><path d="M22 0L30 4V26L22 30Z" fill="#2aa6f5" stroke="none" /></Ic>,
    <FrLogo size={24} />,
    <Ic w={28}><path d="M3 1L13 3L27 3L25 27L15 25.500L1 25Z" fill="#f2f2f2" stroke="#ddd" /></Ic>,
  ];
  return (
    <div className="flex h-[56px] shrink-0 items-center bg-[#080808] pl-[15px] text-white">
      {apps.map((a, i) => (
        <div key={i} className={`relative mb-[-1px] flex h-[50px] w-[50px] items-center justify-center rounded-md ${i === 0 ? "mr-[6.500px]" : "mr-[5px]"} ${i === 6 ? "border border-[#2a2a2a] bg-[#191919]" : ""}`}>
          {a}
          {i === 7 && <span className="absolute font-['Liberation_Serif',serif] text-[17px] text-[#222]">T</span>}
          {i > 0 && <div className={`absolute bottom-[1px] h-1 rounded-full ${i === 6 ? "w-5 bg-[#d99be6]" : "w-2 bg-[#8d8d8d]"}`} />}
        </div>
      ))}
      <div className="ml-auto flex items-center">
        <Ic w={28} h={30} c="#fff"><path d="M0 0L4 4V29H0ZM28 0L24 4V29H28ZM6 29V8L14 18L22 8V29H18.500V17L14 23L9.500 17V29Z" fill="#fff" stroke="none" /></Ic>
        <span className="ml-[27px]"><ChevronUp size={18} strokeWidth={2.500} /></span>
        <span className="ml-[21px]"><Ic w={20} h={14}><path d="M0 8.500L6 7.500Q9 5 14 5L16 2L19 1.500L20 3.500L16.500 6.500L18 11L16 11L13.500 9L8 10L3 13.500L2 12.500L6 9.500Z" fill="#fff" stroke="none" /></Ic></span>
        <span className="ml-[20px]"><WeChat w={20} /></span>
        <span className="ml-[20px]"><Ic w={20} h={21}><rect width="20" height="21" rx="4" fill="#fff" stroke="none" /><path d="M3 3L8 5L10 8L12 5L17 3V9L13 10L12 18H9L8 10L4 9Z" fill="#12c26a" stroke="none" /></Ic></span>
        <span className="ml-[20px] font-['Noto_Sans_CJK_SC',sans-serif] text-[19px] leading-none">英</span>
        <span className="ml-[21px] flex items-center gap-[9px]"><Wifi size={20} /><Volume2 size={20} strokeWidth={1.600} />
          <Ic w={21} h={17} c="#fff"><rect x="3" y="4" width="14" height="11" rx="2.500" fill="#e8e8e8" /><path d="M19 8V12" strokeWidth={2} /><path d="M4 0L1 7H4L3 11L8 5H5Z" fill="#fff" stroke="#080808" strokeWidth={.6} /></Ic>
        </span>
        <div className="ml-[19px] w-[79px] whitespace-nowrap pt-px text-right font-['Open_Sans',sans-serif] text-[15px] leading-[20px] tracking-[-0.35px]">20:36<br />2024/10/27</div>
        <span className="ml-[10px] mr-[20px]"><Bell size={20} strokeWidth={1.600} /></span>
      </div>
    </div>
  );
}

export default function App() {
  return (
    <div className="relative flex h-[1073px] w-[1915px] flex-col overflow-hidden bg-[#f5f5f7]">
      <TitleBar />
      <MenuBar />
      <div className="flex h-[967px] shrink-0">
        <LeftPanel />
        <div className="flex w-[10px] shrink-0 flex-col items-center bg-[#e8e8e8] pt-[12px]">
          <Tri dir="left" w={10} />
          <span className="mt-[461px]"><Ic w={5} h={7} c="#aaa"><path d="M1 0V7M4 0V7" strokeWidth={1} /></Ic></span>
        </div>
        <Center />
        <RightStrip />
        <RightPanel />
      </div>
      <Taskbar />
      <Dialog />
      <div className="absolute left-[913px] top-[584px] whitespace-nowrap font-['Noto_Sans_CJK_SC',sans-serif] text-[36.4px] leading-[52px] text-[#ee1c24]">出现次数第二多的，选择粉色</div>
    </div>
  );
}
